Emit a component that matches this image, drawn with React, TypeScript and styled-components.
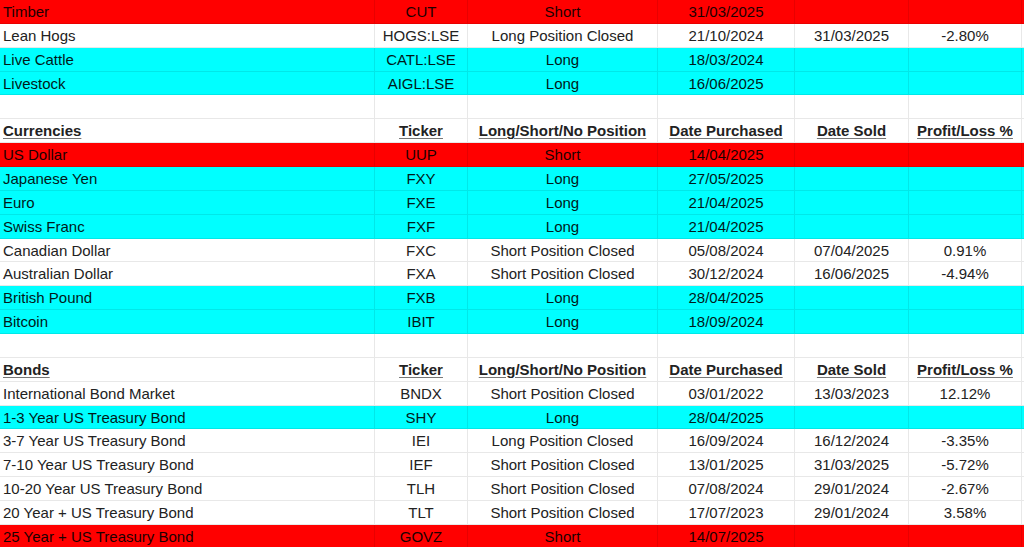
import { createGlobalStyle } from "styled-components";
import styled from "styled-components";

type Tone = "red" | "cyan" | "white";

type Row =
  | { kind: "blank" }
  | { kind: "head"; title: string }
  | { kind: "data"; tone: Tone; cells: string[] };

const H = { kind: "head" } as const;

const rows: Row[] = [
  { kind: "data", tone: "red", cells: ["Timber", "CUT", "Short", "31/03/2025", "", ""] },
  { kind: "data", tone: "white", cells: ["Lean Hogs", "HOGS:LSE", "Long Position Closed", "21/10/2024", "31/03/2025", "-2.80%"] },
  { kind: "data", tone: "cyan", cells: ["Live Cattle", "CATL:LSE", "Long", "18/03/2024", "", ""] },
  { kind: "data", tone: "cyan", cells: ["Livestock", "AIGL:LSE", "Long", "16/06/2025", "", ""] },
  { kind: "blank" },
  { ...H, title: "Currencies" },
  { kind: "data", tone: "red", cells: ["US Dollar", "UUP", "Short", "14/04/2025", "", ""] },
  { kind: "data", tone: "cyan", cells: ["Japanese Yen", "FXY", "Long", "27/05/2025", "", ""] },
  { kind: "data", tone: "cyan", cells: ["Euro", "FXE", "Long", "21/04/2025", "", ""] },
  { kind: "data", tone: "cyan", cells: ["Swiss Franc", "FXF", "Long", "21/04/2025", "", ""] },
  { kind: "data", tone: "white", cells: ["Canadian Dollar", "FXC", "Short Position Closed", "05/08/2024", "07/04/2025", "0.91%"] },
  { kind: "data", tone: "white", cells: ["Australian Dollar", "FXA", "Short Position Closed", "30/12/2024", "16/06/2025", "-4.94%"] },
  { kind: "data", tone: "cyan", cells: ["British Pound", "FXB", "Long", "28/04/2025", "", ""] },
  { kind: "data", tone: "cyan", cells: ["Bitcoin", "IBIT", "Long", "18/09/2024", "", ""] },
  { kind: "blank" },
  { ...H, title: "Bonds" },
  { kind: "data", tone: "white", cells: ["International Bond Market", "BNDX", "Short Position Closed", "03/01/2022", "13/03/2023", "12.12%"] },
  { kind: "data", tone: "cyan", cells: ["1-3 Year US Treasury Bond", "SHY", "Long", "28/04/2025", "", ""] },
  { kind: "data", tone: "white", cells: ["3-7 Year US Treasury Bond", "IEI", "Long Position Closed", "16/09/2024", "16/12/2024", "-3.35%"] },
  { kind: "data", tone: "white", cells: ["7-10 Year US Treasury Bond", "IEF", "Short Position Closed", "13/01/2025", "31/03/2025", "-5.72%"] },
  { kind: "data", tone: "white", cells: ["10-20 Year US Treasury Bond", "TLH", "Short Position Closed", "07/08/2024", "29/01/2024", "-2.67%"] },
  { kind: "data", tone: "white", cells: ["20 Year + US Treasury Bond", "TLT", "Short Position Closed", "17/07/2023", "29/01/2024", "3.58%"] },
  { kind: "data", tone: "red", cells: ["25 Year + US Treasury Bond", "GOVZ", "Short", "14/07/2025", "", ""] },
];

const headings = ["Ticker", "Long/Short/No Position", "Date Purchased", "Date Sold", "Profit/Loss %"];

const GlobalStyle = createGlobalStyle`
  html, body {
    margin: 0;
    padding: 0;
    background: #ffffff;
  }
  body {
    font-family: "Liberation Sans", Arial, sans-serif;
    overflow: hidden;
  }
`;

const Sheet = styled.div`
  width: 1024px;
  height: 547px;
  overflow: hidden;
  background: #ffffff;
`;

const toneBg: Record<Tone, string> = {
  red: "#ff0000",
  cyan: "#00ffff",
  white: "#ffffff",
};

const toneInk: Record<Tone, string> = {
  red: "#1c0000",
  cyan: "#001a1a",
  white: "#222222",
};

const SheetRow = styled.div<{ $tone: Tone }>`
  display: grid;
  grid-template-columns: 375px 93px 190px 137px 114px 113px;
  height: 23.86px;
  box-sizing: border-box;
  background: ${(p) => toneBg[p.$tone]};
  color: ${(p) => toneInk[p.$tone]};
  border-bottom: 1px solid rgba(0, 0, 0, 0.09);
  font-size: 15px;
`;

const Cell = styled.div<{ $first?: boolean; $bold?: boolean }>`
  display: flex;
  align-items: center;
  justify-content: ${(p) => (p.$first ? "flex-start" : "center")};
  padding: 0 3px;
  box-sizing: border-box;
  border-right: 1px solid rgba(0, 0, 0, 0.09);
  white-space: nowrap;
  overflow: hidden;
  font-weight: ${(p) => (p.$bold ? 700 : 400)};
  text-decoration: ${(p) => (p.$bold ? "underline" : "none")};
  text-decoration-color: #777;
  text-underline-offset: 2px;
`;

export default function App() {
  return (
    <>
      <GlobalStyle />
      <Sheet>
        {rows.map((r, i) => {
          if (r.kind === "blank") {
            return (
              <SheetRow key={i} $tone="white">
                {Array.from({ length: 6 }).map((_, j) => (
                  <Cell key={j} />
                ))}
              </SheetRow>
            );
          }
          if (r.kind === "head") {
            return (
              <SheetRow key={i} $tone="white">
                <Cell $first $bold>
                  {r.title}
                </Cell>
                {headings.map((h) => (
                  <Cell key={h} $bold>
                    {h}
                  </Cell>
                ))}
              </SheetRow>
            );
          }
          return (
            <SheetRow key={i} $tone={r.tone}>
              {r.cells.map((c, j) => (
                <Cell key={j} $first={j === 0}>
                  {c}
                </Cell>
              ))}
            </SheetRow>
          );
        })}
      </Sheet>
    </>
  );
}
